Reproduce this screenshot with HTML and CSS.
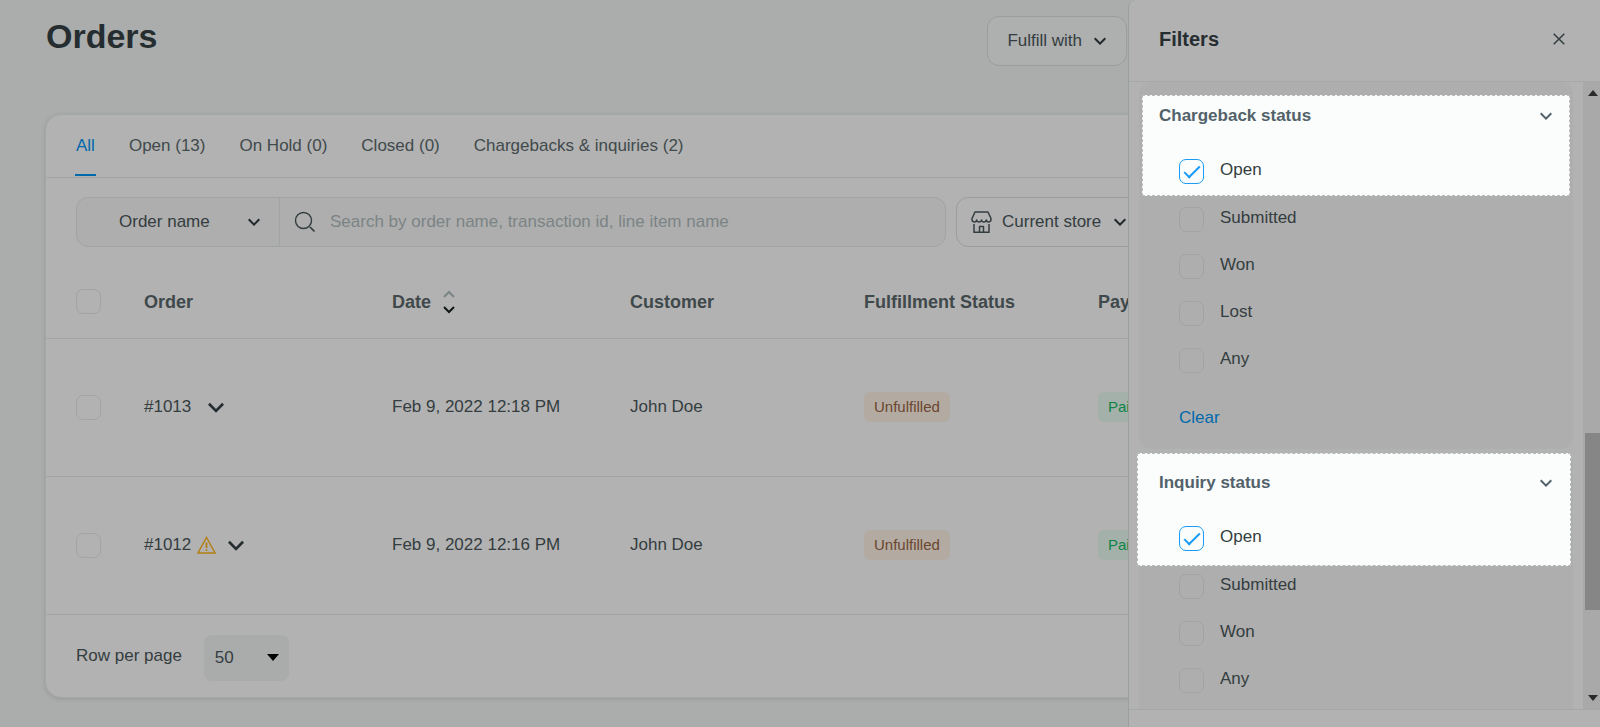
FILE: index.html
```html
<!DOCTYPE html>
<html lang="en">
<head>
    <meta charset="UTF-8">
    <meta name="viewport" content="width=device-width, initial-scale=1.0">
    <title>Orders</title>
    <link rel="stylesheet" href="styles.css">
</head>
<body>
    <!-- Shared icons -->
    <svg class="sprite" aria-hidden="true">
        <symbol id="chevron" viewBox="0 0 12 8"><path d="M.7 1.2 6 6.6l5.3-5.4" fill="none" stroke="currentColor" stroke-width="2"/></symbol>
    </svg>

    <main class="page">
        <header class="page-header">
            <h1>Orders</h1>
            <button class="btn fulfill-btn" type="button">Fulfill with <svg class="chevron"><use href="#chevron"/></svg></button>
        </header>

        <section class="card">
            <nav class="tabs">
                <a class="tab active" href="#">All</a>
                <a class="tab" href="#">Open (13)</a>
                <a class="tab" href="#">On Hold (0)</a>
                <a class="tab" href="#">Closed (0)</a>
                <a class="tab" href="#">Chargebacks &amp; inquiries (2)</a>
            </nav>

            <div class="toolbar">
                <div class="search-group">
                    <div class="select-wrap">
                        <select class="field-select" aria-label="Search field">
                            <option>Order name</option>
                        </select>
                        <svg class="chevron"><use href="#chevron"/></svg>
                    </div>
                    <label class="search">
                        <svg width="22" height="22" viewBox="0 0 22 22" fill="none" stroke="currentColor" stroke-width="1.4"><circle cx="9.5" cy="9.5" r="8"/><path d="m16 16 4.5 4.5" stroke-width="1.7"/></svg>
                        <input type="text" aria-label="Search" placeholder="Search by order name, transaction id, line item name">
                    </label>
                </div>
                <button class="btn store-btn" type="button">
                    <svg width="21" height="22" viewBox="0 0 21 22" fill="none" stroke="currentColor" stroke-width="1.5" stroke-linejoin="round"><path d="M4 1h13l3 6.5v1a2.4 2.4 0 0 1-4.75.5 2.4 2.4 0 0 1-4.75 0 2.4 2.4 0 0 1-4.75 0A2.4 2.4 0 0 1 1 8.5v-1z"/><path d="M3 13v8.300h15V13M8.500 21v-5.500h4V21"/></svg>
                    Current store
                    <svg class="chevron"><use href="#chevron"/></svg>
                </button>
            </div>

            <table class="orders">
                <thead>
                    <tr>
                        <th class="col-check"><input type="checkbox" class="check" aria-label="Select all"></th>
                        <th class="col-order">Order</th>
                        <th class="col-date">
                            <span class="sortable">Date
                                <svg width="12" height="24" viewBox="0 0 12 24" fill="none" stroke-width="2"><path d="m1 7 5-5 5 5" stroke="#7b8585"/><path d="m1 17 5 5 5-5" stroke="#111617"/></svg>
                            </span>
                        </th>
                        <th class="col-customer">Customer</th>
                        <th class="col-status">Fulfillment Status</th>
                        <th>Pay</th>
                    </tr>
                </thead>
                <tbody>
                    <tr>
                        <td><input type="checkbox" class="check" aria-label="Select #1013"></td>
                        <td><span class="order-id">#1013 <svg class="expand"><use href="#chevron"/></svg></span></td>
                        <td>Feb 9, 2022 12:18 PM</td>
                        <td>John Doe</td>
                        <td><span class="badge unfulfilled">Unfulfilled</span></td>
                        <td><span class="badge paid">Paid</span></td>
                    </tr>
                    <tr>
                        <td><input type="checkbox" class="check" aria-label="Select #1012"></td>
                        <td>
                            <span class="order-id">#1012
                                <svg class="warning" viewBox="0 0 19 18" fill="none" stroke="currentColor" stroke-width="1.4"><path d="M9.5 1.5 18 17H1z"/><path d="M9.5 6.5V12M9.5 13.3v1.8" stroke-width="1.8"/></svg>
                                <svg class="expand"><use href="#chevron"/></svg>
                            </span>
                        </td>
                        <td>Feb 9, 2022 12:16 PM</td>
                        <td>John Doe</td>
                        <td><span class="badge unfulfilled">Unfulfilled</span></td>
                        <td><span class="badge paid">Paid</span></td>
                    </tr>
                </tbody>
            </table>

            <div class="pager">
                <label for="rows">Row per page</label>
                <div class="select-wrap">
                    <select id="rows" class="rows-select">
                        <option>50</option>
                    </select>
                    <svg class="caret" viewBox="0 0 12 7"><path d="M0 0h12L6 7z" fill="currentColor"/></svg>
                </div>
            </div>
        </section>
    </main>

    <!-- Filters drawer -->
    <aside class="drawer">
        <header class="drawer-header">
            <h2>Filters</h2>
            <button class="close" type="button" aria-label="Close"><svg width="12" height="12" viewBox="0 0 12 12" fill="none" stroke="currentColor" stroke-width="1.5"><path d="m.7.7 10.6 10.6M11.3.7.7 11.3"/></svg></button>
        </header>

        <div class="drawer-body">
            <div class="filters">
                <section class="panel first">
                    <div class="highlight">
                        <button class="panel-title" type="button">Chargeback status <svg class="chevron"><use href="#chevron"/></svg></button>
                        <label class="option"><input type="checkbox" class="check" checked><span>Open</span></label>
                    </div>
                    <label class="option"><input type="checkbox" class="check"><span>Submitted</span></label>
                    <label class="option"><input type="checkbox" class="check"><span>Won</span></label>
                    <label class="option"><input type="checkbox" class="check"><span>Lost</span></label>
                    <label class="option"><input type="checkbox" class="check"><span>Any</span></label>
                    <a class="clear" href="#">Clear</a>
                </section>

                <section class="panel second">
                    <div class="highlight">
                        <button class="panel-title" type="button">Inquiry status <svg class="chevron"><use href="#chevron"/></svg></button>
                        <label class="option"><input type="checkbox" class="check" checked><span>Open</span></label>
                    </div>
                    <label class="option"><input type="checkbox" class="check"><span>Submitted</span></label>
                    <label class="option"><input type="checkbox" class="check"><span>Won</span></label>
                    <label class="option"><input type="checkbox" class="check"><span>Any</span></label>
                </section>
            </div>

            <div class="scrollbar" aria-hidden="true">
                <svg viewBox="0 0 10 6"><path d="M0 6h10L5 0z" fill="currentColor"/></svg>
                <div class="track"><div class="thumb"></div></div>
                <svg viewBox="0 0 10 6"><path d="M0 0h10L5 6z" fill="currentColor"/></svg>
            </div>
        </div>

        <footer class="drawer-footer"></footer>
    </aside>
</body>
</html>
```

FILE: styles.css
```css
* {
    box-sizing: border-box;
    margin: 0;
    padding: 0;
}

body {
    height: 100vh;
    overflow: hidden;
    background-color: #abadac;
    color: #343d40;
    font-family: "Liberation Sans", Arial, sans-serif;
    font-size: 17px;
    line-height: 20px;
}

button,
input,
select {
    font: inherit;
    color: inherit;
    background: none;
    border: none;
}

a {
    text-decoration: none;
}

.sprite {
    display: none;
}

.chevron {
    width: 12px;
    height: 8px;
    flex: none;
    color: #20282b;
}

/* Page */

.page {
    padding: 16px 45px 30px;
}

.page-header {
    display: flex;
    justify-content: space-between;
    align-items: flex-start;
    padding-right: 428px;
    margin-bottom: 48px;
}

h1 {
    padding-left: 1px;
    font-size: 34px;
    line-height: 40px;
    color: #262d31;
}

.btn {
    display: flex;
    align-items: center;
    height: 50px;
    border: 1px solid #999d9d;
    border-radius: 12px;
}

.fulfill-btn {
    gap: 12px;
    padding: 0 20px 0 19px;
    background-color: #aeafaf;
}

.card {
    background-color: #b2b2b2;
    border: 1px solid #a4a7a7;
    border-radius: 16px;
    box-shadow: 0 1px 4px rgba(0, 0, 0, 0.12);
}

.tabs {
    display: flex;
    gap: 32px;
    padding: 0 29px;
    border-bottom: 1px solid #a0a4a4;
}

.tab {
    padding: 21px 1px 18px;
    margin-bottom: 1px;
    border-bottom: 2px solid transparent;
    color: #414a4c;
}

.tab.active {
    color: #0069ac;
    border-color: #0069ac;
}

.toolbar {
    display: flex;
    gap: 10px;
    padding: 19px 30px;
}

.search-group {
    display: flex;
    flex: 0 1 870px;
    height: 50px;
    background-color: #aeaeae;
    border: 1px solid #a0a4a4;
    border-radius: 12px;
}

.select-wrap {
    display: flex;
    align-items: center;
    position: relative;
}

.select-wrap svg {
    position: absolute;
    pointer-events: none;
}

.field-select {
    appearance: none;
    width: 203px;
    height: 48px;
    padding: 0 40px 0 42px;
    border-right: 1px solid #a0a4a4;
}

.select-wrap .chevron {
    right: 20px;
}

.search {
    display: flex;
    align-items: center;
    flex: 1;
    gap: 14px;
    padding: 0 14px;
}

.search input {
    flex: 1;
    outline: none;
}

.search input::placeholder {
    color: #7b8485;
}

.store-btn {
    gap: 10px;
    padding: 0 20px 0 14px;
}

.store-btn .chevron {
    margin-left: 3px;
}

/* Orders table */

.orders {
    width: 100%;
    table-layout: fixed;
    border-collapse: collapse;
}

.orders th,
.orders td {
    border-bottom: 1px solid #a0a4a4;
    text-align: left;
    vertical-align: middle;
}

.orders th {
    height: 72px;
    font-size: 18px;
    color: #3f494b;
}

.orders td {
    height: 138px;
}

.orders .col-check {
    width: 98px;
}

.orders .col-order {
    width: 248px;
}

.orders .col-date {
    width: 238px;
}

.orders .col-customer,
.orders .col-status {
    width: 234px;
}

.orders .check {
    margin-left: 30px;
}

.sortable {
    display: flex;
    align-items: center;
    gap: 12px;
}

.order-id {
    display: flex;
    align-items: center;
}

.expand {
    width: 16px;
    height: 11px;
    margin-left: 17px;
    color: #262d31;
}

.warning {
    width: 19px;
    height: 18px;
    margin-left: 6px;
    color: #b37f14;
}

.warning + .expand {
    margin-left: 12px;
}

.badge {
    display: inline-block;
    padding: 5px 10px;
    border-radius: 6px;
    font-size: 15px;
}

.unfulfilled {
    background-color: #b3aba1;
    color: #6b4630;
}

.paid {
    background-color: #a3b1aa;
    color: #0c8445;
}

.pager {
    display: flex;
    align-items: center;
    gap: 22px;
    padding: 20px 30px 16px;
}

.pager label {
    padding-bottom: 4px;
}

.rows-select {
    appearance: none;
    width: 85px;
    height: 46px;
    padding-left: 11px;
    padding-right: 30px;
    border-radius: 8px;
    background-color: #a9acab;
}

.caret {
    right: 10px;
    width: 12px;
    height: 7px;
    color: #000;
}

/* Checkboxes */

.check {
    appearance: none;
    display: block;
    flex: none;
    width: 25px;
    height: 25px;
    border: 1px solid #a1a4a4;
    border-radius: 7px;
}

.check:checked {
    display: grid;
    place-items: center;
    border-color: #1a9bf5;
}

.check:checked::after {
    content: "";
    width: 14px;
    height: 6px;
    margin: 0 0 3px 1px;
    border-left: 2px solid #1a9bf5;
    border-bottom: 2px solid #1a9bf5;
    transform: rotate(-45deg);
}

/* Drawer */

.drawer {
    position: fixed;
    top: 0;
    right: 0;
    bottom: 0;
    width: 472px;
    display: flex;
    flex-direction: column;
    background-color: #b2b2b2;
    border-left: 1px solid #9a9f9f;
    border-top-left-radius: 8px;
}

.drawer-header {
    display: flex;
    justify-content: space-between;
    align-items: center;
    height: 82px;
    padding: 0 30px 4px;
    border-bottom: 1px solid #a7a9a9;
}

h2 {
    font-size: 20px;
    color: #262d31;
}

.close {
    width: 22px;
    height: 22px;
    display: grid;
    place-items: center;
}

.drawer-body {
    flex: 1;
    min-height: 0;
    display: flex;
}

.filters {
    flex: 1;
    overflow: hidden;
    padding: 0 10px;
    display: flex;
    flex-direction: column;
    gap: 4px;
}

.panel {
    flex: none;
    padding-bottom: 21px;
    background-color: #aeaeae;
    border-radius: 12px;
}

.first {
    padding-top: 13px;
}

.first .highlight {
    margin: 0 3px;
    padding: 0 17px 0 16px;
}

.second .highlight {
    margin: 0 2px -3px -2px;
    padding: 9px 18px 3px 21px;
}

.highlight {
    background-color: #fafdfc;
    border: 1px dashed #b9bcbc;
}

.panel-title {
    display: flex;
    justify-content: space-between;
    align-items: center;
    width: 100%;
    height: 40px;
    margin-bottom: 12px;
    font-weight: bold;
    color: #53626a;
}

.panel-title .chevron {
    color: #53626a;
}

.option {
    display: flex;
    align-items: center;
    gap: 16px;
    height: 47px;
    padding-left: 40px;
}

.highlight .option {
    padding-left: 20px;
}

.option span {
    padding-bottom: 3px;
}

.clear {
    display: inline-block;
    margin: 24px 0 0 40px;
    color: #0069ac;
}

.scrollbar {
    display: flex;
    flex-direction: column;
    align-items: center;
    width: 17px;
    padding: 8px 0 8px 2px;
    background-color: #a9a9a9;
    color: #2b2b2b;
}

.scrollbar svg {
    width: 10px;
    height: 6px;
}

.track {
    flex: 1;
    align-self: stretch;
    display: grid;
    grid-template-rows: 337fr 177fr 85fr;
}

.thumb {
    grid-row: 2;
    background-color: #868686;
}

.drawer-footer {
    height: 18px;
    border-top: 1px solid #a4a7a7;
}
```
